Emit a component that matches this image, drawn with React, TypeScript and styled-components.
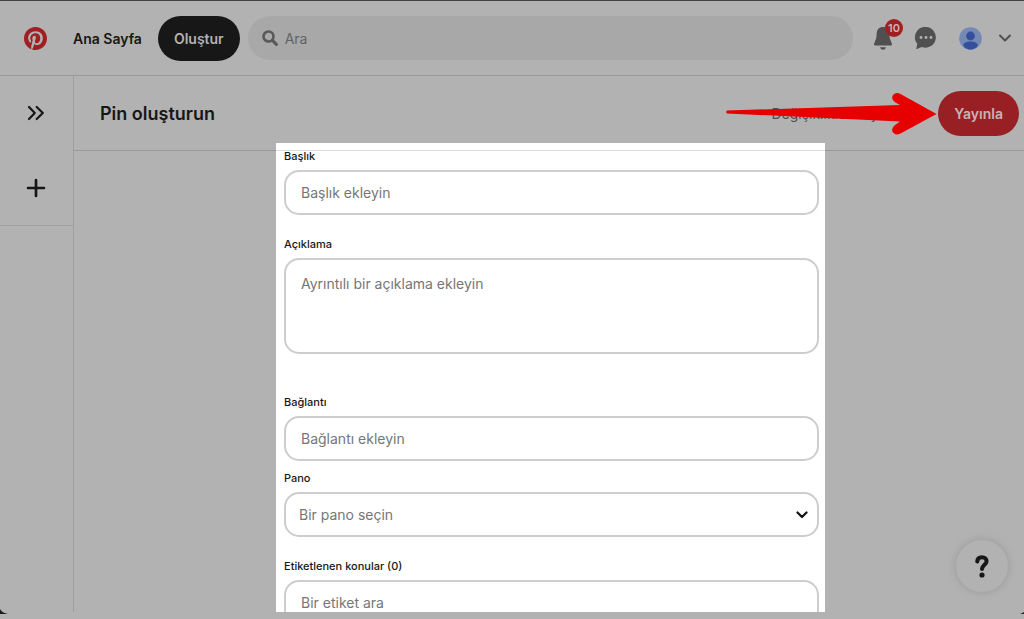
import React from 'react';
import styled, { createGlobalStyle } from 'styled-components';

const GlobalStyle = createGlobalStyle`
  * { box-sizing: border-box; }
  body {
    margin: 0;
    background: #b2b2b2;
    color: #171717;
    font-family: Inter, "Liberation Sans", sans-serif;
    font-size: 14px;
  }
  button, input, textarea, select { font: inherit; color: inherit; }
`;

const Shell = styled.div`
  position: relative;
  display: flex;
  flex-direction: column;
  height: 100vh;
  min-height: 400px;
  padding-bottom: 7px;
  border-top: 1px solid #444444;
  overflow: hidden;
`;

const Corner = styled.svg<{ $side: 'left' | 'right' }>`
  position: absolute;
  bottom: 5px;
  ${(p) => p.$side}: 0;
`;

const Header = styled.header`
  display: flex;
  align-items: center;
  flex: none;
  height: 75px;
  padding: 0 12px 0 24px;
  border-bottom: 1px solid #9a9a9a;
`;

const LogoLink = styled.a`
  display: flex;
  margin-right: 10px;
`;

const NavLink = styled.a<{ $active?: boolean }>`
  display: flex;
  align-items: center;
  height: 45px;
  padding: 0 16px;
  border-radius: 23px;
  background: ${(p) => (p.$active ? '#171717' : 'transparent')};
  color: ${(p) => (p.$active ? '#b2b2b2' : '#171717')};
  font-weight: 600;
  text-decoration: none;
  white-space: nowrap;
`;

const SearchBox = styled.label`
  display: flex;
  flex: 1;
  align-items: center;
  gap: 7px;
  height: 44px;
  min-width: 0;
  margin: 0 20px 0 8px;
  padding: 0 14px;
  border-radius: 22px;
  background: #a8a8a8;
`;

const SearchInput = styled.input`
  flex: 1;
  min-width: 0;
  padding: 0;
  border: 0;
  outline: 0;
  background: transparent;
  &::placeholder { color: #636363; opacity: 1; }
`;

const HeaderTools = styled.div`
  display: flex;
  align-items: center;
  gap: 22px;
`;

const AccountTools = styled.div`
  display: flex;
  align-items: center;
  gap: 16px;
`;

const IconButton = styled.button`
  position: relative;
  display: flex;
  padding: 0;
  border: 0;
  background: none;
  color: #171717;
`;

const Badge = styled.span`
  position: absolute;
  top: -8px;
  left: 12px;
  display: flex;
  align-items: center;
  justify-content: center;
  width: 18px;
  height: 18px;
  border-radius: 9px;
  background: #a01f23;
  color: #c8b4b4;
  font-size: 11px;
  font-weight: 600;
`;

const Body = styled.div`
  display: grid;
  flex: 1;
  grid-template-columns: 74px minmax(0, 1fr);
  min-height: 0;
`;

const Sidebar = styled.aside`
  border-right: 1px solid #9f9f9f;
`;

const SideTools = styled.div`
  display: flex;
  flex-direction: column;
  align-items: center;
  height: 150px;
  padding-right: 2px;
  border-bottom: 1px solid #9f9f9f;
`;

const SideSlot = styled.div`
  display: flex;
  flex: 1;
  align-items: center;
`;

const Main = styled.main`
  display: flex;
  flex-direction: column;
  min-height: 0;
`;

const Toolbar = styled.div`
  display: flex;
  flex: none;
  align-items: center;
  justify-content: space-between;
  height: 75px;
  padding: 0 5px 0 26px;
  border-bottom: 1px solid #9a9a9a;
`;

const Title = styled.h1`
  margin: 0;
  font-size: 18px;
  font-weight: 600;
`;

const Actions = styled.div`
  position: relative;
  display: flex;
  align-items: center;
  gap: 16px;
`;

const Status = styled.span`
  color: #505050;
`;

const PublishButton = styled.button`
  height: 45px;
  padding: 0 16px;
  border: 0;
  border-radius: 23px;
  background: #982024;
  color: #c9b3b3;
  font-weight: 600;
`;

const Arrow = styled.svg`
  position: absolute;
  top: 0;
  right: 82px;
`;

const Canvas = styled.div`
  display: flex;
  flex: 1;
  justify-content: center;
  min-height: 0;
  margin-top: -8px;
  padding-left: 3px;
`;

const Panel = styled.form`
  position: relative;
  display: flex;
  flex-direction: column;
  width: 100%;
  max-width: 549px;
  overflow: hidden;
  background: #ffffff;
`;

const Divider = styled.hr`
  flex: none;
  width: 100%;
  height: 1px;
  margin: 7px 0 -1px;
  border: 0;
  background: #dcdcdc;
`;

const Field = styled.div<{ $gap: number }>`
  display: flex;
  flex: none;
  flex-direction: column;
  gap: 8px;
  padding: 0 6px 0 8px;
  margin-bottom: ${(p) => p.$gap}px;
`;

const Label = styled.label`
  font-size: 11px;
  line-height: 12px;
  font-weight: 500;
`;

const TextInput = styled.input`
  width: 100%;
  height: 45px;
  padding: 0 15px;
  border: 2px solid #cdcdcd;
  border-radius: 15px;
  outline: 0;
  background: #ffffff;
  &::placeholder { color: #767676; opacity: 1; }
`;

const TextArea = styled.textarea`
  display: block;
  width: 100%;
  height: 96px;
  padding: 14px 15px;
  border: 2px solid #cdcdcd;
  border-radius: 15px;
  outline: 0;
  resize: none;
  line-height: 20px;
  &::placeholder { color: #767676; opacity: 1; }
`;

const SelectWrap = styled.div`
  position: relative;
`;

const Select = styled.select`
  display: block;
  width: 100%;
  height: 45px;
  padding: 0 13px;
  border: 2px solid #cdcdcd;
  border-radius: 15px;
  outline: 0;
  appearance: none;
  background: #ffffff;
  color: #767676;
`;

const SelectChevron = styled.svg`
  position: absolute;
  top: 19px;
  right: 11px;
  pointer-events: none;
`;

const HelpButton = styled.button`
  position: absolute;
  right: 16px;
  bottom: 27px;
  display: flex;
  align-items: center;
  justify-content: center;
  width: 52px;
  height: 52px;
  padding: 0;
  border: 0;
  border-radius: 50%;
  background: #b2b2b2;
  box-shadow: 0 0 6px 2px #a2a2a2;
`;

export default function App() {
  return (
    <>
      <GlobalStyle />
      <Shell>
        <Header>
          <LogoLink href="#" aria-label="Pinterest">
            <svg width="23" height="23" viewBox="0 0 24 24">
              <circle cx="12" cy="12" r="10" fill="#b2b2b2" />
              <path
                fill="#a01f23"
                d="M12 0C5.373 0 0 5.372 0 12c0 5.084 3.163 9.426 7.627 11.174-.105-.949-.2-2.405.042-3.441.218-.937 1.407-5.965 1.407-5.965s-.359-.719-.359-1.782c0-1.668.967-2.914 2.171-2.914 1.023 0 1.518.769 1.518 1.69 0 1.029-.655 2.568-.994 3.995-.283 1.194.599 2.169 1.777 2.169 2.133 0 3.772-2.249 3.772-5.495 0-2.873-2.064-4.882-5.012-4.882-3.414 0-5.418 2.561-5.418 5.207 0 1.031.397 2.138.893 2.738a.36.36 0 0 1 .083.345l-.333 1.36c-.053.22-.174.267-.402.161-1.499-.698-2.436-2.889-2.436-4.649 0-3.785 2.75-7.262 7.929-7.262 4.163 0 7.398 2.967 7.398 6.931 0 4.136-2.607 7.464-6.227 7.464-1.216 0-2.359-.631-2.75-1.378l-.748 2.853c-.271 1.043-1.002 2.35-1.492 3.146C9.57 23.812 10.763 24 12 24c6.627 0 12-5.373 12-12S18.627 0 12 0z"
              />
            </svg>
          </LogoLink>
          <NavLink href="#">Ana Sayfa</NavLink>
          <NavLink href="#" $active>Oluştur</NavLink>
          <SearchBox>
            <svg width="16" height="16" viewBox="0 0 16 16" fill="none" stroke="#585858" strokeLinecap="round">
              <circle cx="6.5" cy="6.5" r="5" strokeWidth="2.6" />
              <path d="M10.5 10.5 14.4 14.4" strokeWidth="3" />
            </svg>
            <SearchInput type="search" placeholder="Ara" aria-label="Ara" />
          </SearchBox>
          <HeaderTools>
            <IconButton type="button" aria-label="Bildirimler">
              <svg width="20" height="23" viewBox="0 0 20 23" fill="#505050">
                <path d="M10 0C6 0 3.900 2.700 3.700 6.200L3.300 11 1 17Q.6 18.400 2 18.400H18Q19.400 18.400 19 17L16.700 11 16.300 6.200C16.100 2.700 14 0 10 0ZM7 20.300H13Q12.300 22.800 10 22.800T7 20.300Z" />
              </svg>
              <Badge>10</Badge>
            </IconButton>
            <IconButton type="button" aria-label="Mesajlar">
              <svg width="22" height="23" viewBox="0 0 22 23">
                <path fill="#505050" d="M11 0A10.300 10.300 0 1 1 6.800 19.900L1.200 22.200 2.300 16.800A10.300 10.300 0 0 1 11 0Z" />
                <g fill="#b2b2b2">
                  <circle cx="6" cy="10.500" r="1.400" />
                  <circle cx="11" cy="10.500" r="1.400" />
                  <circle cx="16" cy="10.500" r="1.400" />
                </g>
              </svg>
            </IconButton>
            <AccountTools>
              <IconButton type="button" aria-label="Profil">
                <svg width="23" height="23" viewBox="0 0 23 23">
                  <circle cx="11.500" cy="11.500" r="11.300" fill="#7689b5" />
                  <circle cx="11.500" cy="9" r="4.400" fill="#344f9b" />
                  <path fill="#344f9b" d="M4.300 18.500C4.600 15.500 7.500 14.500 11.500 14.500S18.400 15.500 18.700 18.500C18 20.500 14.500 22.500 11.500 22.500S5 20.500 4.300 18.500Z" />
                </svg>
              </IconButton>
              <IconButton type="button" aria-label="Hesap menüsü">
                <svg width="14" height="8" viewBox="0 0 14 8" fill="none" stroke="#505050" strokeWidth="2" strokeLinecap="round" strokeLinejoin="round">
                  <path d="M2 1.500 7 6.500 12 1.500" />
                </svg>
              </IconButton>
            </AccountTools>
          </HeaderTools>
        </Header>
        <Body>
          <Sidebar>
            <SideTools>
              <SideSlot>
                <IconButton type="button" aria-label="Genişlet">
                  <svg width="18" height="16" viewBox="0 0 18 16" fill="none" stroke="currentColor" strokeWidth="2.200" strokeLinecap="round" strokeLinejoin="round">
                    <path d="M2 2 7.800 8 2 14M9.700 2 15.800 8 9.700 14" />
                  </svg>
                </IconButton>
              </SideSlot>
              <SideSlot>
                <IconButton type="button" aria-label="Yeni pin">
                  <svg width="20" height="20" viewBox="0 0 20 20" fill="none" stroke="currentColor" strokeWidth="2.700" strokeLinecap="round">
                    <path d="M10 2V18M2 10H18" />
                  </svg>
                </IconButton>
              </SideSlot>
            </SideTools>
          </Sidebar>
          <Main>
            <Toolbar>
              <Title>Pin oluşturun</Title>
              <Actions>
                <Status>Değişiklikler kaydedildi</Status>
                <PublishButton type="button">Yayınla</PublishButton>
                <Arrow width="212" height="46" viewBox="0 0 212 46" aria-hidden="true">
                  <path fill="#e60000" d="M2 19.500 175 14 170 11.200Q165.500 8 168 4 171 .500 175.500 3L211.500 23 175.500 42.500Q171 45 168 41.500 165.500 37.500 170 34L175 30.500 2 22.500Q.5 21 2 19.500Z" />
                </Arrow>
              </Actions>
            </Toolbar>
            <Canvas>
              <Panel>
                <Divider />
                <Field $gap={23}>
                  <Label htmlFor="title">Başlık</Label>
                  <TextInput id="title" placeholder="Başlık ekleyin" />
                </Field>
                <Field $gap={42}>
                  <Label htmlFor="description">Açıklama</Label>
                  <TextArea id="description" placeholder="Ayrıntılı bir açıklama ekleyin" />
                </Field>
                <Field $gap={11}>
                  <Label htmlFor="link">Bağlantı</Label>
                  <TextInput id="link" placeholder="Bağlantı ekleyin" />
                </Field>
                <Field $gap={23}>
                  <Label htmlFor="board">Pano</Label>
                  <SelectWrap>
                    <Select id="board" defaultValue="">
                      <option value="">Bir pano seçin</option>
                    </Select>
                    <SelectChevron width="12" height="8" viewBox="0 0 12 8" fill="none" stroke="#111111" strokeWidth="2.200" strokeLinecap="round" strokeLinejoin="round">
                      <path d="M1.500 1.500 6 6 10.500 1.500" />
                    </SelectChevron>
                  </SelectWrap>
                </Field>
                <Field $gap={0}>
                  <Label htmlFor="topics">Etiketlenen konular (0)</Label>
                  <TextInput id="topics" placeholder="Bir etiket ara" />
                </Field>
              </Panel>
            </Canvas>
          </Main>
        </Body>
        <HelpButton type="button" aria-label="Yardım">
          <svg width="14" height="23" viewBox="0 0 14 23" fill="none">
            <path d="M2.200 6.500C2.400 3.500 4.500 2.200 7 2.200S11.600 3.700 11.600 6.200C11.600 9.600 7 9.800 7 14" stroke="#171717" strokeWidth="4" strokeLinecap="round" />
            <circle cx="7" cy="20" r="2.600" fill="#171717" />
          </svg>
        </HelpButton>
        <Corner $side="left" width="8" height="5" viewBox="0 0 8 5" aria-hidden="true">
          <path d="M0 0Q2 4 8 5H0Z" fill="#1c1c1c" />
        </Corner>
        <Corner $side="right" width="4" height="2" viewBox="0 0 4 2" aria-hidden="true">
          <path d="M4 0Q3 1 0 2H4Z" fill="#1c1c1c" />
        </Corner>
      </Shell>
    </>
  );
}
